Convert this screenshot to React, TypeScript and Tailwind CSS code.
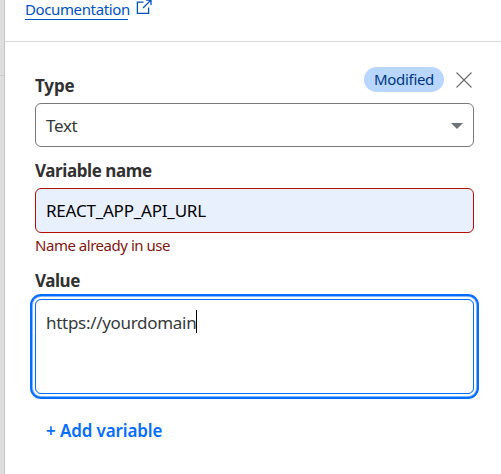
import React from "react";

function ExternalIcon() {
  return (
    <svg width="16" height="16" viewBox="0 0 16 16" fill="none" stroke="#0051c3" strokeWidth="1.3" className="ml-[8px] mt-[-1px] shrink-0">
      <path d="M7.5 3.2H1.4V14.4H12.6V8.5M10 1.2H15V6M14.7 1.3L7 9" />
    </svg>
  );
}

function Label({ children }: { children: React.ReactNode }) {
  return <span className="block h-6 text-[17px] leading-6 font-bold whitespace-nowrap text-[#313131]">{children}</span>;
}

export default function App() {
  return (
    <div className="flex h-[474px] w-[501px] overflow-hidden bg-white font-['Noto_Sans','Open_Sans',sans-serif] text-[#36393a]">
      <aside className="w-[5px] shrink-0 border-r border-[#c6c6c6] bg-[#dedede]">
        <div className="h-[76px] border-b border-[#cacaca]" />
      </aside>
      <main className="flex min-w-0 flex-1 flex-col">
        <header className="flex h-[42px] shrink-0 items-start border-b border-[#d9d9d9] pl-5">
          <a className="h-5 w-[103px] border-b border-[#0051c3] text-[15px] leading-[18px] tracking-[-0.38px] whitespace-nowrap text-[#0051c3]">Documentation</a>
          <ExternalIcon />
        </header>
        <form className="flex w-[469px] flex-col pl-[30px]">
          <div className="flex h-[61px] items-start pt-[25px]">
            <div className="pt-[7px]"><Label><span className="tracking-[-0.1px]">Type</span></Label></div>
            <span className="ml-auto flex h-[25px] w-20 items-center justify-center rounded-full bg-[#b9d6ff] text-[15px] tracking-[-0.3px] text-[#003681]">Modified</span>
            <svg width="16" height="16" viewBox="0 0 16 16" stroke="#6a6d70" strokeWidth="1.1" className="mt-[5px] mr-[2px] ml-3">
              <path d="M.5 .5L15.5 15.5M15.5 .5L.5 15.5" />
            </svg>
          </div>
          <div className="flex h-11 items-center justify-between rounded-md border border-[#797979] pt-px pr-[10px] pl-[10px] text-[17px]">
            <span className="tracking-[-0.3px]">Text</span>
            <svg width="12" height="6" viewBox="0 0 12 6" fill="#6e7377"><path d="M0 0H12L6 6Z" /></svg>
          </div>
          <div className="h-[41px] pt-[12px]"><Label><span className="tracking-[-0.42px]">Variable name</span></Label></div>
          <div className="flex h-[45px] items-center rounded-md border border-[#b20f03] bg-[#e8f0fe] pt-px pl-[10px] text-[17px] text-black">
            <span className="tracking-[-0.22px]">REACT_APP_API_URL</span>
          </div>
          <p className="h-[36px] pt-[2px] text-[15px] leading-5 tracking-[-0.47px] text-[#7f1610]">Name already in use</p>
          <div className="h-[30px]"><Label><span className="tracking-[-0.45px]">Value</span></Label></div>
          <div className="flex h-[95px] items-start rounded-md border border-[#056dff] pt-[10px] pl-[10px] text-[17px] leading-[25px] shadow-[0_0_0_2px_#fff,0_0_0_3px_#82b6ff,0_0_0_5px_#056dff]">
            <span className="tracking-[-0.3px]">https://yourdomain</span>
            <span className="h-[23px] w-px bg-black" />
          </div>
          <button type="button" className="mt-[25px] ml-[11px] flex h-6 items-center self-start text-[17px] font-semibold whitespace-nowrap text-[#056dff]">
            <span className="tracking-[-0.12px]">+ Add variable</span>
          </button>
        </form>
      </main>
    </div>
  );
}
